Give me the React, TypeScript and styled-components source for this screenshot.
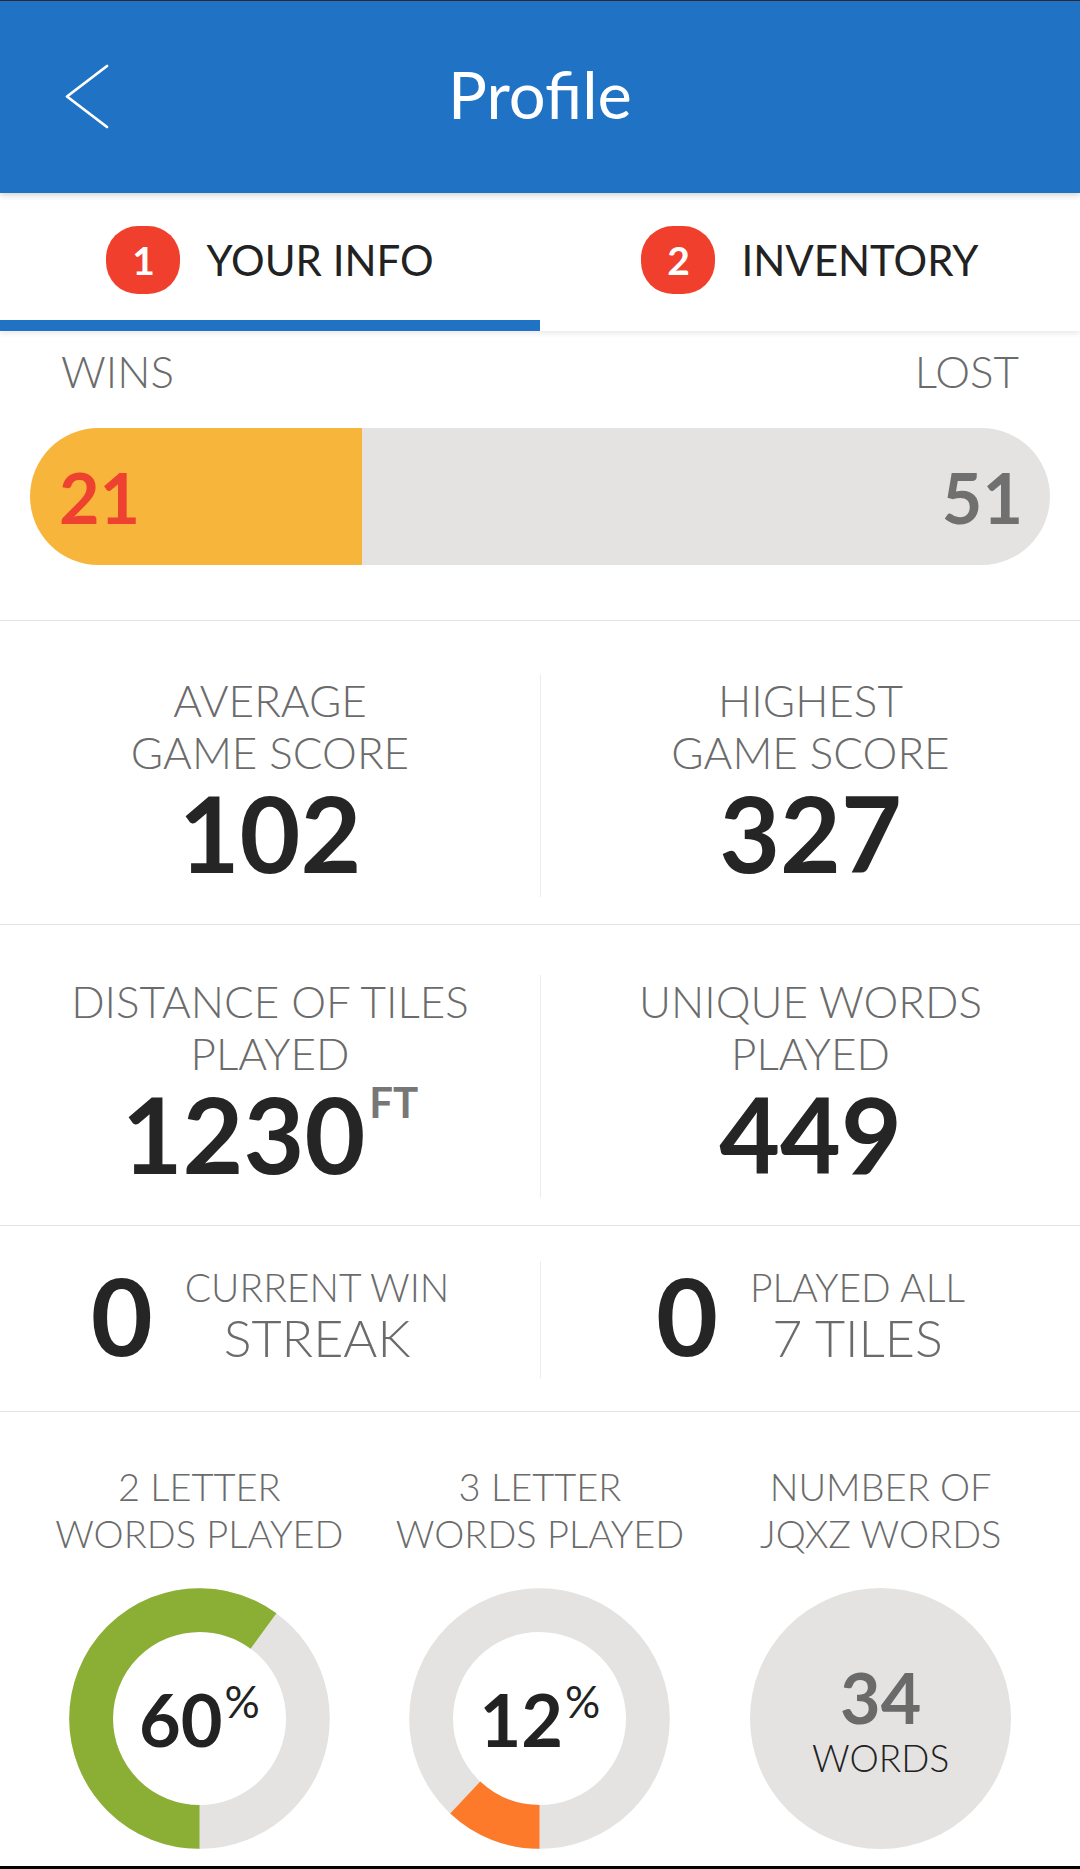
import React from "react";
import styled, { createGlobalStyle } from "styled-components";

const GlobalStyle = createGlobalStyle`
  html, body { margin: 0; padding: 0; background: #ffffff; }
  body { font-family: "Lato", "Open Sans", sans-serif; -webkit-font-smoothing: antialiased; }
  * { box-sizing: border-box; }
`;

const Page = styled.div`
  width: 1080px;
  height: 1869px;
  display: flex;
  flex-direction: column;
  border-top: 1px solid #2b2b2b;
  border-bottom: 3px solid #000000;
  background: #ffffff;
  overflow: hidden;
`;

const Header = styled.header`
  position: relative;
  z-index: 2;
  height: 192px;
  flex: none;
  background: #1f72c4;
  display: grid;
  grid-template-columns: 1fr auto 1fr;
  align-items: center;
  box-shadow: 0 2px 6px rgba(0, 0, 0, 0.18);
`;

const BackButton = styled.button`
  justify-self: start;
  margin-left: 64px;
  padding: 0;
  border: 0;
  background: none;
  display: flex;
  cursor: pointer;
`;

const Title = styled.h1`
  margin: 0 0 6px;
  font-size: 65px;
  font-weight: 400;
  line-height: 1;
  color: #ffffff;
`;

const TabBar = styled.nav`
  position: relative;
  z-index: 1;
  flex: none;
  display: grid;
  grid-template-columns: 1fr 1fr;
  background: #ffffff;
  box-shadow: 0 3px 5px rgba(0, 0, 0, 0.08);
`;

const Tab = styled.div<{ $active?: boolean }>`
  height: 138px;
  padding-top: 7px;
  display: flex;
  align-items: center;
  justify-content: center;
  gap: 26px;
  border-bottom: 11px solid ${(p) => (p.$active ? "#1f72c4" : "transparent")};
`;

const Badge = styled.span`
  width: 74px;
  height: 68px;
  border-radius: 32px;
  background: #f0402d;
  color: #ffffff;
  display: flex;
  align-items: center;
  justify-content: center;
  font-size: 39px;
  font-weight: 700;
  line-height: 1;
`;

const TabLabel = styled.span`
  font-size: 42px;
  font-weight: 400;
  line-height: 1;
  color: #222222;
`;

const RecordSection = styled.section`
  flex: none;
  padding: 14px 0 55px;
  border-bottom: 1px solid #e4e4e4;
`;

const RecordLabels = styled.div`
  display: flex;
  justify-content: space-between;
  padding: 0 61px;
  font-size: 44px;
  font-weight: 300;
  line-height: 52px;
  color: #6b6b6b;
`;

const RecordBar = styled.div<{ $pct: number }>`
  margin: 31px 30px 0;
  height: 137px;
  border-radius: 69px;
  display: flex;
  align-items: center;
  justify-content: space-between;
  padding: 0 27px 0 29px;
  background: linear-gradient(
    90deg,
    #f7b53b ${(p) => p.$pct}%,
    #e4e3e1 ${(p) => p.$pct}%
  );
`;

const BarValue = styled.span<{ $color: string }>`
  font-size: 70px;
  font-weight: 700;
  line-height: 1;
  color: ${(p) => p.$color};
`;

const StatRow = styled.section<{ $padTop: number }>`
  flex: none;
  display: grid;
  grid-template-columns: 1fr 1fr;
  padding: ${(p) => p.$padTop}px 0 27px;
  border-bottom: 1px solid #e4e4e4;
`;

const StatCell = styled.div`
  display: flex;
  flex-direction: column;
  align-items: center;
  padding-bottom: 12px;
  & + & {
    border-left: 1px solid #ececec;
  }
`;

const StatLabel = styled.div`
  font-size: 44px;
  font-weight: 300;
  line-height: 52px;
  color: #6b6b6b;
  text-align: center;
  white-space: nowrap;
`;

const StatValue = styled.div`
  margin-top: 2px;
  font-size: 105px;
  font-weight: 700;
  line-height: 105px;
  color: #252525;
  white-space: nowrap;
`;

const Unit = styled.span`
  display: inline-block;
  vertical-align: top;
  margin-left: 4px;
  font-size: 42px;
  font-weight: 700;
  line-height: 42px;
  color: #777777;
`;

const StreakRow = styled.section`
  flex: none;
  display: grid;
  grid-template-columns: 1fr 1fr;
  padding: 35px 0 33px;
  border-bottom: 1px solid #e4e4e4;
`;

const StreakCell = styled.div`
  display: flex;
  align-items: center;
  justify-content: center;
  gap: 32px;
  padding-bottom: 10px;
  & + & {
    border-left: 1px solid #ececec;
  }
`;

const StreakValue = styled.span`
  font-size: 107px;
  font-weight: 700;
  line-height: 1;
  color: #252525;
`;

const StreakText = styled.div`
  display: flex;
  flex-direction: column;
  align-items: center;
  font-weight: 300;
  color: #6b6b6b;
  white-space: nowrap;
`;

const StreakTop = styled.span`
  font-size: 39px;
  line-height: 44px;
`;

const StreakBottom = styled.span`
  font-size: 52px;
  line-height: 56px;
`;

const WordsSection = styled.section`
  flex: 1;
  display: grid;
  grid-template-columns: repeat(3, 1fr);
  align-content: start;
  padding: 51px 29px 0;
`;

const WordsCell = styled.div`
  display: flex;
  flex-direction: column;
  align-items: center;
`;

const WordsLabel = styled.div`
  font-size: 38px;
  font-weight: 300;
  line-height: 47px;
  color: #6b6b6b;
  text-align: center;
  white-space: nowrap;
`;

const Dial = styled.div`
  margin-top: 31px;
  width: 261px;
  height: 261px;
  display: grid;
  place-items: center;
  & > * {
    grid-area: 1 / 1;
  }
`;

const SolidDial = styled(Dial)`
  border-radius: 50%;
  background: #e4e3e1;
`;

const PercentValue = styled.div`
  display: flex;
  align-items: flex-start;
  color: #222222;
`;

const PercentNumber = styled.span`
  font-size: 72px;
  font-weight: 700;
  line-height: 1;
`;

const PercentSign = styled.span`
  margin: -4px 0 0 2px;
  font-size: 44px;
  font-weight: 400;
  line-height: 1;
`;

const CountStack = styled.div`
  display: flex;
  flex-direction: column;
  align-items: center;
`;

const CountNumber = styled.span`
  font-size: 70px;
  font-weight: 700;
  line-height: 1;
  color: #6a6a6a;
`;

const CountUnit = styled.span`
  margin-top: 7px;
  font-size: 37px;
  font-weight: 300;
  line-height: 1;
  color: #222222;
`;

const BackIcon = () => (
  <svg width="46" height="68" viewBox="0 0 46 68" fill="none">
    <polyline
      points="43,3 3,33.5 43,64"
      stroke="#ffffff"
      strokeWidth="2.8"
      strokeLinecap="round"
      strokeLinejoin="round"
    />
  </svg>
);

const Ring = ({ pct, color }: { pct: number; color: string }) => {
  const r = 108.4;
  const c = 2 * Math.PI * r;
  return (
    <svg width="261" height="261" viewBox="0 0 261 261">
      <circle cx="130.5" cy="130.5" r={r} fill="none" stroke="#e4e3e1" strokeWidth="43.8" />
      <circle
        cx="130.5"
        cy="130.5"
        r={r}
        fill="none"
        stroke={color}
        strokeWidth="43.8"
        strokeDasharray={`${(c * pct) / 100} ${c}`}
        transform="rotate(90 130.5 130.5)"
      />
    </svg>
  );
};

const PercentDial = ({ pct, color }: { pct: number; color: string }) => (
  <Dial>
    <Ring pct={pct} color={color} />
    <PercentValue>
      <PercentNumber>{pct}</PercentNumber>
      <PercentSign>%</PercentSign>
    </PercentValue>
  </Dial>
);

export default function App() {
  const wins = 21;
  const lost = 51;
  return (
    <>
      <GlobalStyle />
      <Page>
        <Header>
          <BackButton aria-label="Back">
            <BackIcon />
          </BackButton>
          <Title>Profile</Title>
          <span />
        </Header>

        <TabBar>
          <Tab $active>
            <Badge>1</Badge>
            <TabLabel>YOUR INFO</TabLabel>
          </Tab>
          <Tab>
            <Badge>2</Badge>
            <TabLabel>INVENTORY</TabLabel>
          </Tab>
        </TabBar>

        <RecordSection>
          <RecordLabels>
            <span>WINS</span>
            <span>LOST</span>
          </RecordLabels>
          <RecordBar $pct={32.55}>
            <BarValue $color="#ef4130">{wins}</BarValue>
            <BarValue $color="#707070">{lost}</BarValue>
          </RecordBar>
        </RecordSection>

        <StatRow $padTop={53}>
          <StatCell>
            <StatLabel>
              AVERAGE
              <br />
              GAME SCORE
            </StatLabel>
            <StatValue>102</StatValue>
          </StatCell>
          <StatCell>
            <StatLabel>
              HIGHEST
              <br />
              GAME SCORE
            </StatLabel>
            <StatValue>327</StatValue>
          </StatCell>
        </StatRow>

        <StatRow $padTop={50}>
          <StatCell>
            <StatLabel>
              DISTANCE OF TILES
              <br />
              PLAYED
            </StatLabel>
            <StatValue>
              1230<Unit>FT</Unit>
            </StatValue>
          </StatCell>
          <StatCell>
            <StatLabel>
              UNIQUE WORDS
              <br />
              PLAYED
            </StatLabel>
            <StatValue>449</StatValue>
          </StatCell>
        </StatRow>

        <StreakRow>
          <StreakCell>
            <StreakValue>0</StreakValue>
            <StreakText>
              <StreakTop>CURRENT WIN</StreakTop>
              <StreakBottom>STREAK</StreakBottom>
            </StreakText>
          </StreakCell>
          <StreakCell>
            <StreakValue>0</StreakValue>
            <StreakText>
              <StreakTop>PLAYED ALL</StreakTop>
              <StreakBottom>7 TILES</StreakBottom>
            </StreakText>
          </StreakCell>
        </StreakRow>

        <WordsSection>
          <WordsCell>
            <WordsLabel>
              2 LETTER
              <br />
              WORDS PLAYED
            </WordsLabel>
            <PercentDial pct={60} color="#8aaf34" />
          </WordsCell>
          <WordsCell>
            <WordsLabel>
              3 LETTER
              <br />
              WORDS PLAYED
            </WordsLabel>
            <PercentDial pct={12} color="#fd7a2b" />
          </WordsCell>
          <WordsCell>
            <WordsLabel>
              NUMBER OF
              <br />
              JQXZ WORDS
            </WordsLabel>
            <SolidDial>
              <CountStack>
                <CountNumber>34</CountNumber>
                <CountUnit>WORDS</CountUnit>
              </CountStack>
            </SolidDial>
          </WordsCell>
        </WordsSection>
      </Page>
    </>
  );
}
